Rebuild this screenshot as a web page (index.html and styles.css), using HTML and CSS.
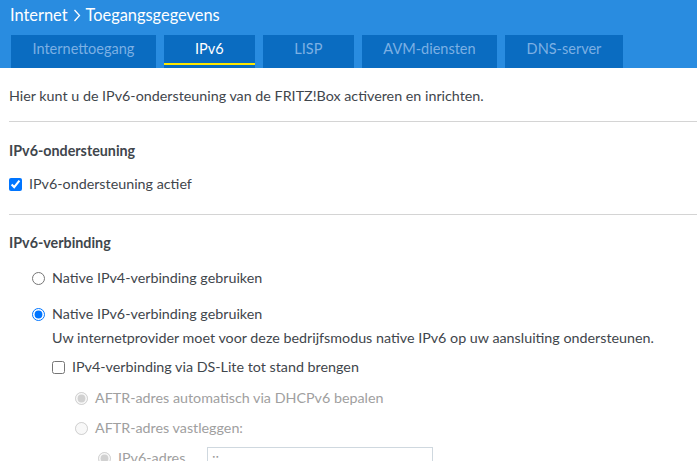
FILE: index.html
```html
<!DOCTYPE html>
<html lang="nl">
<head>
<meta charset="utf-8">
<title>Toegangsgegevens</title>
<link rel="stylesheet" href="styles.css">
</head>
<body>
<header class="top">
  <h1 class="crumb">Internet <svg class="chev" width="8" height="13" viewBox="0 0 8 13"><path d="M1.5 1 L6.5 6.5 L1.5 12" fill="none" stroke="#fff" stroke-width="1.3"/></svg> Toegangsgegevens</h1>
  <nav class="tabs">
    <a class="tab">Internettoegang</a>
    <a class="tab active">IPv6</a>
    <a class="tab">LISP</a>
    <a class="tab">AVM-diensten</a>
    <a class="tab">DNS-server</a>
  </nav>
</header>
<main class="content">
  <p class="intro">Hier kunt u de IPv6-ondersteuning van de FRITZ!Box activeren en inrichten.</p>
  <hr class="sep sep1">
  <h2 class="head head1">IPv6-ondersteuning</h2>
  <label class="row row-cb1"><input type="checkbox" checked><span>IPv6-ondersteuning actief</span></label>
  <hr class="sep sep2">
  <h2 class="head head2">IPv6-verbinding</h2>
  <label class="row lvl1 r1"><input type="radio" name="v"><span>Native IPv4-verbinding gebruiken</span></label>
  <label class="row lvl1 r2"><input type="radio" name="v" checked><span>Native IPv6-verbinding gebruiken</span></label>
  <p class="desc">Uw internetprovider moet voor deze bedrijfsmodus native IPv6 op uw aansluiting ondersteunen.</p>
  <label class="row lvl2 r3"><input type="checkbox"><span>IPv4-verbinding via DS-Lite tot stand brengen</span></label>
  <label class="row lvl3 r4 dis"><input type="radio" name="a" checked disabled><span>AFTR-adres automatisch via DHCPv6 bepalen</span></label>
  <label class="row lvl3 r5 dis"><input type="radio" name="a" disabled><span>AFTR-adres vastleggen:</span></label>
  <div class="row lvl4 r6 dis"><input type="radio" name="b" checked disabled><span class="lbl6">IPv6-adres</span><input class="field" type="text" value="::" disabled></div>
</main>
</body>
</html>
```
FILE: styles.css
```css
html, body {
  margin: 0;
  padding: 0;
  background: #fff;
  overflow: hidden;
}
body {
  font-family: "Source Sans Pro", Lato, "Liberation Sans", sans-serif;
  font-size: 14.3px;
  color: #3f464c;
}
.top {
  background: #298ce0;
  padding: 0 0 0 11px;
  height: 68px;
  display: flex;
  flex-direction: column;
}
.crumb {
  margin: 0 0 0 -1px;
  padding: 3px 0 8px;
  height: 35px;
  box-sizing: border-box;
  font-size: 16.4px;
  font-weight: normal;
  color: #fff;
  line-height: 22px;
  display: flex;
  align-items: center;
  gap: 5px;
  align-self: flex-start;
}
.chev { display: block; }
.tabs {
  display: flex;
  gap: 8px;
  height: 33px;
}
.tab {
  background: #0a6cc1;
  color: #7cb0e4;
  font-size: 14.5px;
  min-width: 91px;
  box-sizing: border-box;
  padding: 0 21.5px 3px;
  text-align: center;
  line-height: 28px;
  position: relative;
}
.tab.active {
  color: #fff;
}
.tab.active::after {
  content: "";
  position: absolute;
  left: 0;
  right: 0;
  bottom: 3px;
  height: 2px;
  background: #ffe800;
}
.content {
  padding-left: 9px;
}
.intro {
  margin: 17px 0 0;
  line-height: 22px;
}
.sep {
  border: 0;
  height: 1px;
  background: #d4d4d4;
  margin: 0;
}
.sep1 { margin-top: 14px; }
.sep2 { margin-top: 19px; }
.head {
  margin: 0;
  font-size: 14.3px;
  font-weight: bold;
  line-height: 22px;
}
.head1 { margin-top: 18px; }
.head2 { margin-top: 17px; }
.row {
  display: flex;
  align-items: center;
  line-height: 22px;
  height: 22px;
}
.row input[type=checkbox], .row input[type=radio] {
  margin: 0 7px 0 0;
  width: 13px;
  height: 13px;
}
.row-cb1 { margin-top: 11px; }
.lvl1 { padding-left: 23px; }
.lvl2 { padding-left: 43px; }
.lvl3 { padding-left: 66px; }
.lvl4 { padding-left: 89px; }
.r1 { margin-top: 13px; }
.r2 { margin-top: 14px; }
.desc {
  margin: 2px 0 0 43px;
  line-height: 22px;
}
.r3 { margin-top: 7px; }
.r4 { margin-top: 9px; }
.r5 { margin-top: 8px; }
.r6 { margin-top: 8px; align-items: flex-start; }
.r6 input[type=radio] { margin-top: 5px; }
.dis { color: #a0a0a0; }
.lbl6 { width: 89px; }
.field {
  width: 226px;
  height: 20px;
  box-sizing: border-box;
  border: 1px solid #cfd8df;
  background: #fff;
  font: inherit;
  line-height: 18px;
  color: #999;
  padding: 0 4px;
  margin-top: 0;
}
```
